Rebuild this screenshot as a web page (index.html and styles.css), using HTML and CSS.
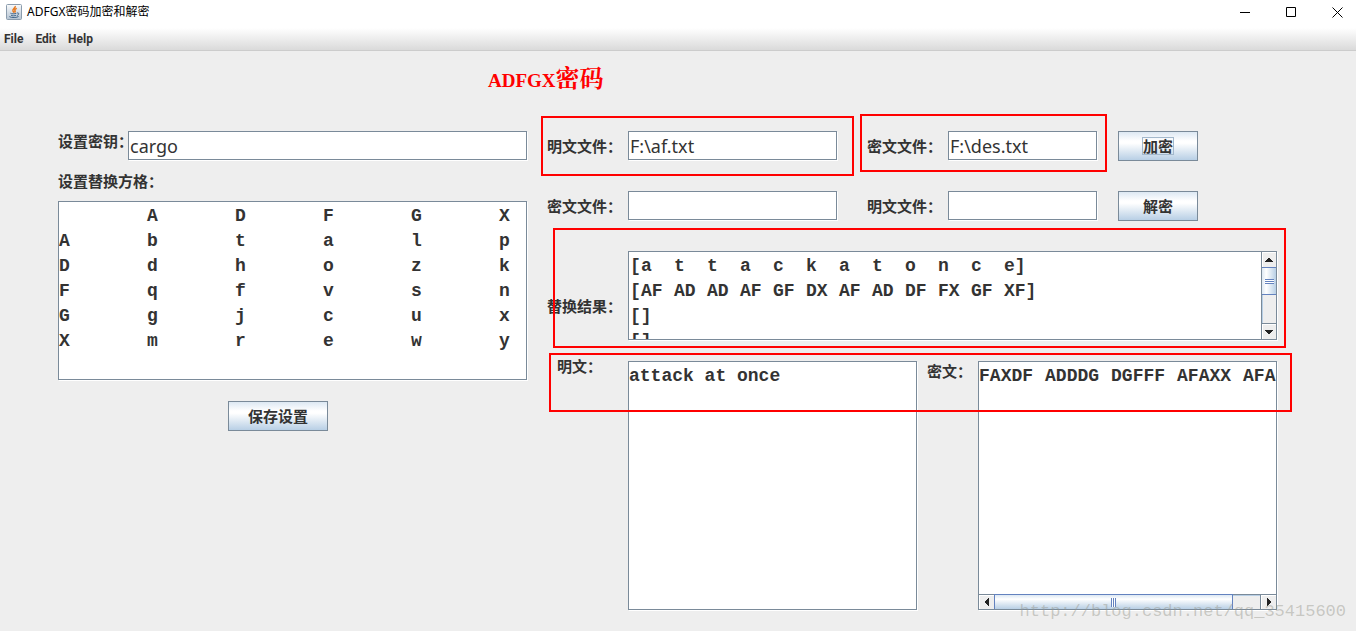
FILE: index.html
```html
<!DOCTYPE html>
<html lang="zh-CN">
<head>
<meta charset="utf-8">
<title>ADFGX密码加密和解密</title>
<link rel="stylesheet" href="styles.css">
</head>
<body>
<header class="titlebar">
  <svg class="app-icon" viewBox="0 0 16 16" aria-hidden="true">
    <defs><linearGradient id="tile" x1="0" y1="0" x2="0" y2="1"><stop offset="0" stop-color="#fafbfc"/><stop offset="1" stop-color="#b4c3d2"/></linearGradient></defs>
    <rect x="0.5" y="0.5" width="15" height="15" rx="1" fill="url(#tile)" stroke="#8b9cad"/>
    <path d="M9.2 2C10 4 5.8 5 7 7.2L8 8.6M10.8 4.4C8.6 5.4 8.4 6 9.2 7.2L8.6 8.6" fill="none" stroke="#e8791e" stroke-width="1.5"/>
    <path d="M4.4 9.2C5 10 9 10 10.4 9.3M5 11.2C6 12 9 12 10 11.2M11 9C13.6 8.4 13 11 10.8 11.6M3.4 12.6C5 14 11.4 13.8 12.6 12.4" fill="none" stroke="#44688c" stroke-width="1"/>
  </svg>
  <span class="window-title">ADFGX密码加密和解密</span>
  <div class="window-controls">
    <button type="button" aria-label="最小化"><svg viewBox="0 0 11 11"><path d="M0 5.5H10"/></svg></button>
    <button type="button" aria-label="最大化"><svg viewBox="0 0 11 11"><path d="M0.5 0.5H9.5V9.5H0.5Z"/></svg></button>
    <button type="button" aria-label="关闭"><svg viewBox="0 0 11 11"><path d="M0.5 0.5L10.5 10.5M10.5 0.5L0.5 10.5"/></svg></button>
  </div>
</header>
<nav class="menubar">
  <button type="button">File</button>
  <button type="button">Edit</button>
  <button type="button">Help</button>
</nav>
<main class="content">
  <h1 class="heading"><span class="heading-latin">ADFGX</span>密码</h1>
  <div class="columns">
    <section class="settings">
      <div class="key-row">
        <label class="label" for="key">设置密钥：</label>
        <input class="field" id="key" type="text" value="cargo">
      </div>
      <label class="label square-label" for="square">设置替换方格：</label>
      <textarea class="pane square" id="square" spellcheck="false">&#9;A&#9;D&#9;F&#9;G&#9;X
A&#9;b&#9;t&#9;a&#9;l&#9;p
D&#9;d&#9;h&#9;o&#9;z&#9;k
F&#9;q&#9;f&#9;v&#9;s&#9;n
G&#9;g&#9;j&#9;c&#9;u&#9;x
X&#9;m&#9;r&#9;e&#9;w&#9;y</textarea>
      <button class="button save" type="button">保存设置</button>
    </section>
    <section class="work">
      <div class="file-row">
        <div class="file file-wide">
          <label class="label" for="enc-in">明文文件：</label>
          <input class="field" id="enc-in" type="text" value="F:\af.txt">
          <span class="mark mark-source"></span>
        </div>
        <div class="file">
          <label class="label" for="enc-out">密文文件：</label>
          <input class="field" id="enc-out" type="text" value="F:\des.txt">
          <span class="mark mark-target"></span>
        </div>
        <button class="button" type="button"><span class="focus-ring">加密</span></button>
      </div>
      <div class="file-row">
        <div class="file file-wide">
          <label class="label" for="dec-in">密文文件：</label>
          <input class="field" id="dec-in" type="text">
        </div>
        <div class="file">
          <label class="label" for="dec-out">明文文件：</label>
          <input class="field" id="dec-out" type="text">
        </div>
        <button class="button" type="button">解密</button>
      </div>
      <div class="result-row">
        <span class="label result-label" id="result-label">替换结果：</span>
        <div class="pane result" role="group" aria-labelledby="result-label">
          <div class="result-text">
            <div class="tokens"><span>[</span><span>a</span><span>t</span><span>t</span><span>a</span><span>c</span><span>k</span><span>a</span><span>t</span><span>o</span><span>n</span><span>c</span><span>e]</span></div>
            <div class="tokens"><span>[</span><span>AF</span><span>AD</span><span>AD</span><span>AF</span><span>GF</span><span>DX</span><span>AF</span><span>AD</span><span>DF</span><span>FX</span><span>GF</span><span>XF]</span></div>
            <div class="tokens"><span>[]</span></div>
            <div class="tokens"><span>[]</span></div>
          </div>
          <div class="scroll scroll-v">
            <button type="button" aria-label="向上滚动"><svg viewBox="0 0 8 4"><path d="M3 0H5V1H6V2H7V3H8V4H0V3H1V2H2V1H3Z"/></svg></button>
            <div class="track"><div class="thumb"><i class="grip"></i></div></div>
            <button type="button" aria-label="向下滚动"><svg viewBox="0 0 8 4"><path d="M0 0H8V1H7V2H6V3H5V4H3V3H2V2H1V1H0Z"/></svg></button>
          </div>
        </div>
        <span class="mark mark-result"></span>
      </div>
      <div class="text-row">
        <label class="label plain-label" for="plain">明文：</label>
        <textarea class="pane plain" id="plain" spellcheck="false">attack at once</textarea>
        <label class="label cipher-label" for="cipher">密文：</label>
        <div class="pane cipher">
          <textarea class="cipher-text" id="cipher" wrap="off" spellcheck="false">FAXDF&#9;ADDDG&#9;DGFFF&#9;AFAXX&#9;AFA</textarea>
          <div class="scroll scroll-h">
            <button type="button" aria-label="向左滚动"><svg viewBox="0 0 4 8"><path d="M4 0V8H3V7H2V6H1V5H0V3H1V2H2V1H3V0Z"/></svg></button>
            <div class="track"><div class="thumb"><i class="grip"></i></div></div>
            <button type="button" aria-label="向右滚动"><svg viewBox="0 0 4 8"><path d="M0 0H1V1H2V2H3V3H4V5H3V6H2V7H1V8H0Z"/></svg></button>
          </div>
        </div>
        <span class="mark mark-text"></span>
      </div>
    </section>
  </div>
</main>
<div class="watermark">http://blog.csdn.net/qq_35415600</div>
</body>
</html>
```
FILE: styles.css
```css
* { box-sizing: border-box; }

body {
  margin: 0;
  min-height: 100vh;
  display: flex;
  flex-direction: column;
  position: relative;
  background: #eeeeee;
  color: #333333;
  font-family: "Liberation Sans", "Noto Sans CJK SC", sans-serif;
}

button, input, textarea { font: inherit; color: inherit; margin: 0; }

.titlebar {
  display: flex;
  align-items: center;
  height: 28px;
  padding: 0 0 4px 6px;
  gap: 5px;
  background: #ffffff;
}
.app-icon { width: 16px; height: 16px; }
.window-title {
  flex: 1;
  color: #000000;
  font: 12px/16px "Noto Sans", "Noto Sans CJK SC", sans-serif;
}
.window-controls { display: flex; }
.window-controls button {
  width: 46px;
  height: 25px;
  padding: 0;
  border: 0;
  background: none;
  display: flex;
  align-items: center;
  justify-content: center;
}
.window-controls button:last-child { width: 42px; padding-left: 4px; }
.window-controls svg { width: 11px; height: 11px; fill: none; stroke: #000000; }

.menubar {
  display: flex;
  gap: 12px;
  height: 23px;
  padding-left: 4px;
  background: linear-gradient(#ffffff, #dadada);
  border-bottom: 1px solid #cccccc;
}
.menubar button {
  padding: 0;
  border: 0;
  background: none;
  font: bold 12px/16px Roboto, sans-serif;
}

.content {
  flex: 1;
  display: flex;
  flex-direction: column;
  padding: 10px 79px 21px 58px;
}
.heading {
  margin: 0 0 38px 430px;
  color: #ff0000;
  font: bold 24px/32px "Noto Serif CJK SC", "Noto Sans CJK SC", sans-serif;
  height: 32px;
}
.heading-latin { font: bold 19px/32px "Liberation Serif", serif; }

.columns {
  flex: 1;
  display: grid;
  grid-template-columns: 469fr 730fr;
  gap: 20px;
}
.label {
  font: bold 15px/20px "Noto Sans CJK SC", sans-serif;
  white-space: nowrap;
}

.field, .pane {
  background: #ffffff;
  border: 1px solid #7a8a99;
  border-radius: 0;
  box-shadow: 1px 1px 0 #ffffff;
  outline: 0;
}
.field {
  min-width: 0;
  flex: 1;
  height: 29px;
  padding: 0 1px;
  font: 18px/27px "Noto Sans", sans-serif;
}
.pane {
  resize: none;
  overflow: hidden;
  padding: 2px 0;
  font: bold 18px/25px "Liberation Mono", monospace;
}

.button {
  height: 30px;
  padding: 0;
  border: 1px solid #7a8a99;
  background: linear-gradient(#dde8f3 0%, #ffffff 32%, #ffffff 40%, #b8cfe5 100%);
  font: bold 15px/20px "Noto Sans CJK SC", sans-serif;
  white-space: nowrap;
}
.focus-ring {
  display: inline-block;
  height: 18px;
  line-height: 16px;
  border: 1px solid #a3b8cc;
}

.settings { display: flex; flex-direction: column; min-width: 0; }
.key-row { display: flex; height: 30px; }
.key-row .label { width: 70px; }
.square-label { margin: 10px 0; }
.square { height: 179px; tab-size: 88px; }
.save { width: 100px; margin: 21px 0 0 170px; }

.work { display: flex; flex-direction: column; min-width: 0; }
.file-row {
  display: flex;
  height: 30px;
  margin-bottom: 30px;
  padding-right: 79px;
}
.file {
  flex: 230;
  min-width: 0;
  display: flex;
  position: relative;
  margin-right: 21px;
}
.file-wide { flex: 290; margin-right: 30px; }
.file .label { width: 81px; line-height: 30px; }
.file-row .button { flex: none; width: 80px; }

.result-row, .text-row { display: flex; position: relative; }
.result-row { margin-bottom: 21px; }
.result-label { width: 81px; margin-top: 45px; }
.result { flex: 1; height: 89px; display: flex; padding: 0; }
.result-text { flex: 1; padding: 2px 1px; overflow: hidden; }
.tokens { display: flex; }
.tokens span { flex: 0 0 33px; white-space: nowrap; }
.tokens span:first-child { flex-basis: 11px; }

.text-row { flex: 1; }
.plain-label { width: 81px; padding-left: 10px; margin-top: -5px; }
.plain { flex: 289; min-width: 0; }
.cipher-label { width: 61px; padding-left: 10px; }
.cipher { flex: 299; min-width: 0; display: flex; flex-direction: column; padding: 0; }
.cipher-text {
  flex: 1;
  min-height: 0;
  padding: 2px 0;
  border: 0;
  outline: 0;
  resize: none;
  overflow: hidden;
  background: none;
  tab-size: 66px;
}

.scroll { display: flex; background: #eeeeee; }
.scroll button {
  display: flex;
  align-items: center;
  justify-content: center;
  padding: 0;
  border: 0 solid #7a8a99;
  background: #eeeeee;
  box-shadow: inset 1px 1px 0 #ffffff;
}
.scroll svg { fill: #222222; shape-rendering: crispEdges; }
.track { flex: 1; display: flex; box-shadow: inset 1px 1px 0 #b8cfe5; }
.thumb {
  display: flex;
  align-items: center;
  justify-content: center;
  border: 0 solid #6382bf;
}
.scroll-v { width: 15px; flex-direction: column; border-left: 1px solid #7a8a99; }
.scroll-v button { height: 15px; }
.scroll-v button:last-child { height: 16px; border-top-width: 1px; }
.scroll-v svg { flex: none; width: 8px; height: 4px; }
.scroll-v .track { flex-direction: column; }
.scroll-v .thumb {
  height: 28px;
  border-width: 1px 0;
  background: linear-gradient(to right, #dde8f3, #ffffff 30%, #b8cfe5);
}
.scroll-v .grip {
  width: 9px;
  height: 5px;
  background: repeating-linear-gradient(#6382bf 0 1px, #ffffff 1px 2px);
}
.scroll-h { height: 15px; border-top: 1px solid #7a8a99; }
.scroll-h button { width: 15px; }
.scroll-h button:last-child { width: 16px; border-left-width: 1px; }
.scroll-h svg { flex: none; width: 4px; height: 8px; }
.scroll-h .thumb {
  width: 90%;
  border-width: 0 1px;
  box-shadow: 0 -1px 0 #6382bf;
  background: linear-gradient(#dde8f3, #ffffff 30%, #b8cfe5);
}
.scroll-h .grip {
  width: 5px;
  height: 9px;
  background: repeating-linear-gradient(to right, #6382bf 0 1px, #ffffff 1px 2px);
}

.mark {
  position: absolute;
  border: 2px solid #ff0000;
  pointer-events: none;
}
.mark-source { inset: -15px -17px -15px -6px; }
.mark-target { inset: -17px -10px -11px -7px; }
.mark-result { inset: -23px -9px -8px 6px; }
.mark-text { top: -8px; left: 2px; right: -15px; height: 59px; }

.watermark {
  position: absolute;
  right: 10px;
  bottom: 7px;
  color: rgba(150, 150, 140, 0.45);
  font: 17px/24px "Liberation Mono", monospace;
  pointer-events: none;
}
```
